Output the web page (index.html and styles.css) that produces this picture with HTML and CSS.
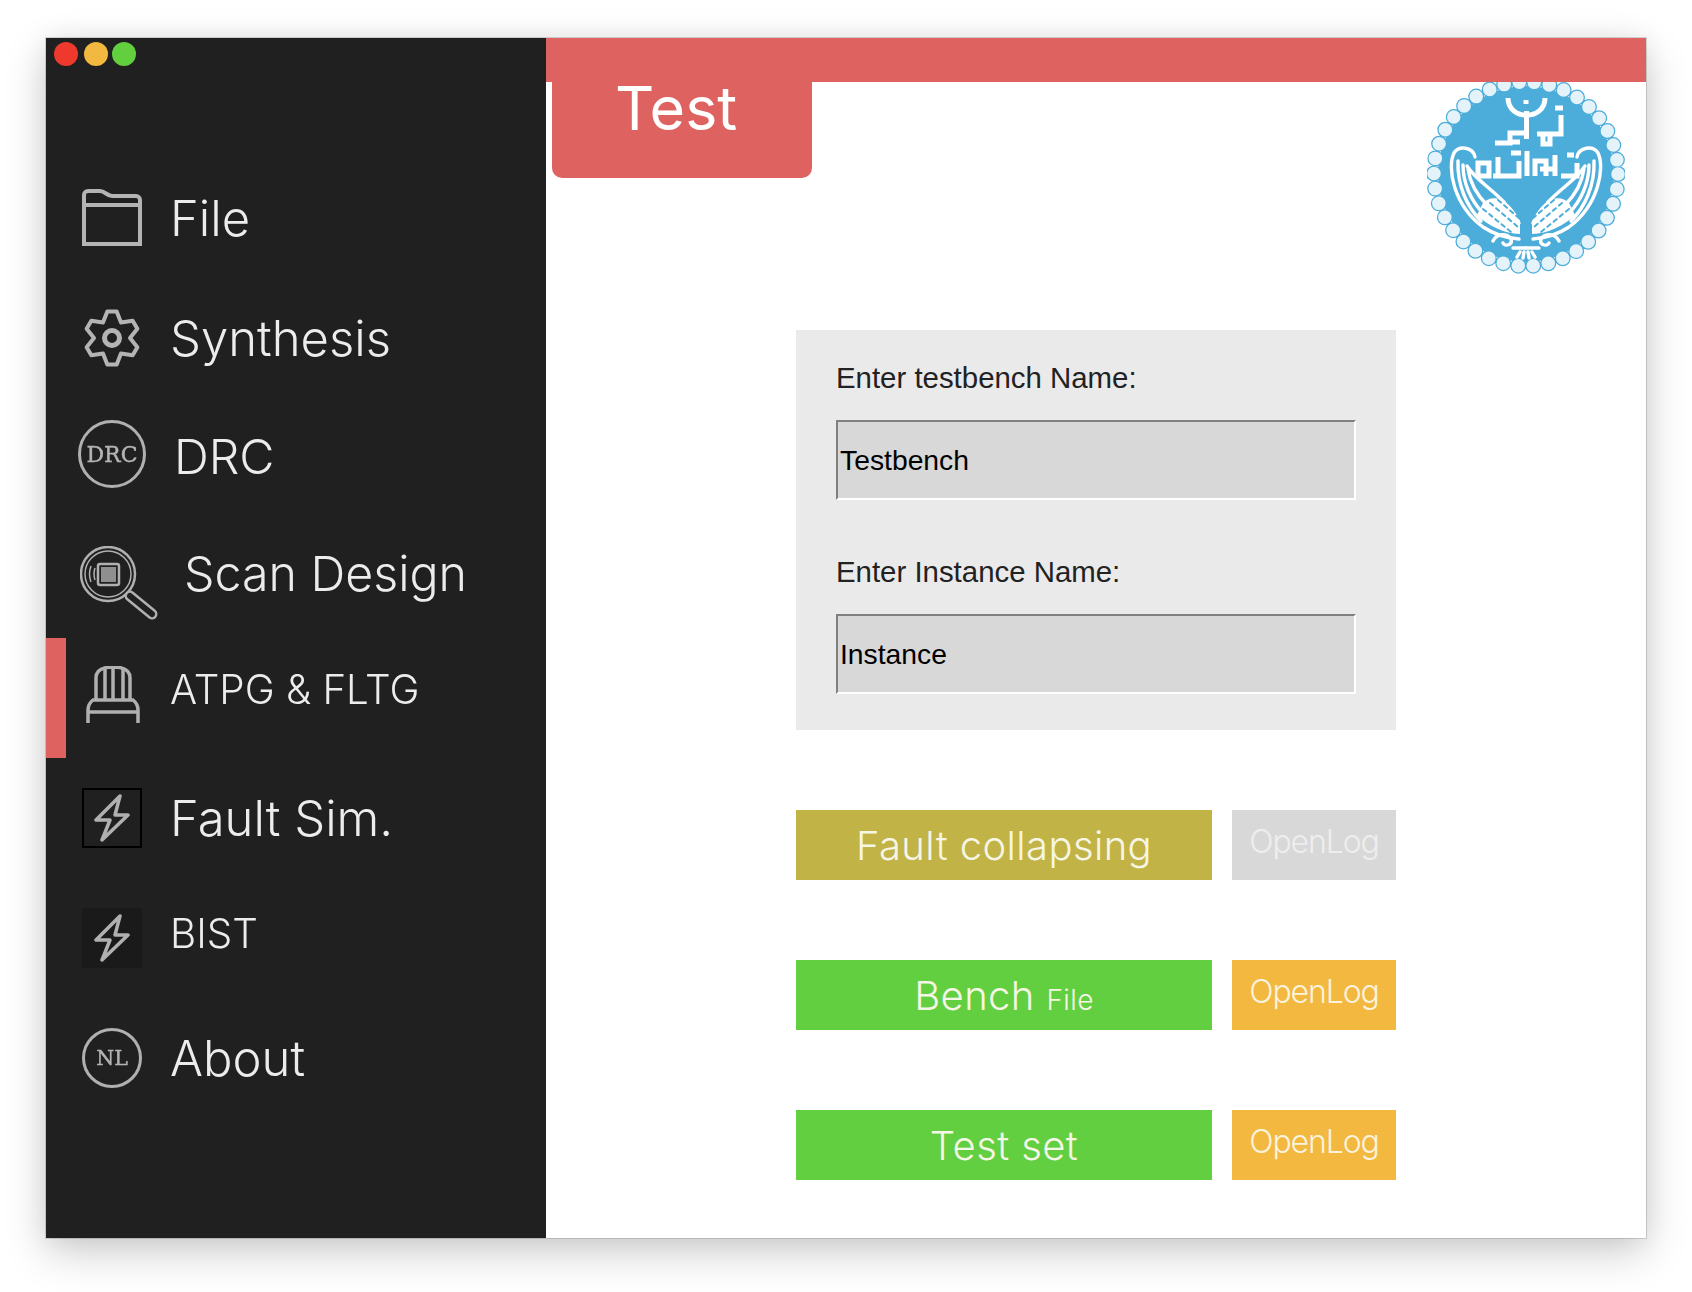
FILE: index.html
```html
<!DOCTYPE html>
<html lang="en">
<head>
<meta charset="utf-8">
<title>Test</title>
<link rel="stylesheet" href="styles.css">
</head>
<body>
<div class="window">
  <aside class="sidebar">
    <div class="lights"><i class="light red"></i><i class="light yellow"></i><i class="light green"></i></div>
    <nav class="nav">
      <a class="row">
        <svg class="icon" viewBox="0 0 60 60"><path d="M2 56V7a4 4 0 0 1 4-4h12c5 0 7 5 12 5h24a4 4 0 0 1 4 4v44zM2 17h56" /></svg>
        <span class="label">File</span>
      </a>
      <a class="row">
        <svg class="icon icon-gear" viewBox="0 0 60 60"><circle cx="30" cy="30" r="7.5"/><path d="M25.31 3.41H34.69L39 14.41 50.68 12.65 55.37 20.77 48 30 55.37 39.23 50.68 47.35 39 45.59 34.69 56.59H25.31L21 45.59 9.32 47.35 4.63 39.23 12 30 4.63 20.77 9.32 12.65 21 14.41Z"/></svg>
        <span class="label">Synthesis</span>
      </a>
      <a class="row row-drc">
        <svg class="icon-drc" viewBox="0 0 68 68"><circle cx="34" cy="34" r="32.5"/><text x="34" y="42" class="seal seal-drc">DRC</text></svg>
        <span class="label label-mid">DRC</span>
      </a>
      <a class="row row-scan">
        <svg class="icon-scan" viewBox="0 0 78 74">
          <circle cx="28" cy="28" r="27"/><circle cx="28" cy="28" r="23" class="thin"/>
          <path class="thin" d="M11 20q-3 8 0 16M15 22q-2 6 0 12"/>
          <rect x="18" y="18" width="21" height="21" rx="2"/>
          <rect x="21" y="21" width="15" height="15" class="chip"/>
          <path class="handle-out" d="M50 50L72 68"/><path class="handle-in" d="M50 50L72 68"/>
        </svg>
        <span class="label label-mid">Scan Design</span>
      </a>
      <a class="row row-active">
        <svg class="icon-chair" viewBox="0 0 60 64"><path d="M14 34V12Q14 1 31 1Q48 1 48 12V34M23 3V34M31 2V34M41 3V34M6 57V44Q6 38 11 34H51Q56 38 56 44V57M6 46H56"/></svg>
        <span class="label label-small">ATPG &amp; FLTG</span>
      </a>
      <a class="row">
        <span class="bolt-box bolt-outlined"><svg class="icon-bolt" viewBox="0 0 60 60"><path d="M38 8 14 32h14l-8 20 26-25H33z"/></svg></span>
        <span class="label">Fault Sim.</span>
      </a>
      <a class="row">
        <span class="bolt-box bolt-filled"><svg class="icon-bolt" viewBox="0 0 60 60"><path d="M38 8 14 32h14l-8 20 26-25H33z"/></svg></span>
        <span class="label label-bist">BIST</span>
      </a>
      <a class="row">
        <svg class="icon-nl" viewBox="0 0 60 60"><circle cx="30" cy="30" r="28.5"/><text x="30" y="37" class="seal seal-nl">NL</text></svg>
        <span class="label">About</span>
      </a>
    </nav>
  </aside>
  <main class="main">
    <div class="topbar"></div>
    <header class="header">
      <div class="tab">Test</div>
      <svg class="logo" viewBox="0 7 198 193">
        <circle cx="99" cy="99" r="88" class="logo-disc"/>
        <circle cx="99" cy="99" r="92" class="pearl-edge"/>
        <circle cx="99" cy="99" r="92" class="pearl"/>
        <g class="logo-line">
          <path d="M81 23C81 46 118 46 118 23M99 25v4M99.500 36V64M68 68H83V58H98M85 67H93"/>
          <path d="M110 59H134V40M128 33h8M116 60V69H123V60"/>
          <path d="M51 101V88H62V101ZM71 101V82M66 101H92V86M84 78h10M100 101V76M108 101V86H119V101M113 94H129M128 101V80M134 101H150V88M140 80h7"/>
        </g>
        <g class="logo-wing">
          <path d="M48 82C46 72 32 70 27 78C20 92 26 130 56 152C68 160 80 163 92 164"/>
          <path d="M31 86C30 110 40 132 54 146M36 90C36 108 44 126 56 138M41 94C43 108 50 120 60 130M40 91C52 110 76 118 92 148"/>
          <path class="wing-mass" d="M56 128C66 118 82 124 93 146V159C78 159 60 150 50 140Z"/>
          <path class="wing-scales" d="M56 134 84 157M63 128 91 152M71 125 93 144M80 127 93 137"/>
          <path d="M66 166C70 158 80 158 84 164C86 170 78 172 76 168M86 173H99M93 177l-3 5M97 177l-1 6"/>
        </g>
        <g class="logo-wing" transform="matrix(-1 0 0 1 198 0)">
          <path d="M48 82C46 72 32 70 27 78C20 92 26 130 56 152C68 160 80 163 92 164"/>
          <path d="M31 86C30 110 40 132 54 146M36 90C36 108 44 126 56 138M41 94C43 108 50 120 60 130M40 91C52 110 76 118 92 148"/>
          <path class="wing-mass" d="M56 128C66 118 82 124 93 146V159C78 159 60 150 50 140Z"/>
          <path class="wing-scales" d="M56 134 84 157M63 128 91 152M71 125 93 144M80 127 93 137"/>
          <path d="M66 166C70 158 80 158 84 164C86 170 78 172 76 168M86 173H99M93 177l-3 5M97 177l-1 6"/>
        </g>
      </svg>
    </header>
    <section class="panel">
      <label class="field-label" for="tb">Enter testbench Name:</label>
      <input class="field" id="tb" type="text" value="Testbench">
      <label class="field-label field-label-next" for="inst">Enter Instance Name:</label>
      <input class="field" id="inst" type="text" value="Instance">
    </section>
    <section class="actions">
      <div class="action">
        <button class="btn btn-main btn-olive">Fault collapsing</button>
        <button class="btn btn-log btn-grey">OpenLog</button>
      </div>
      <div class="action">
        <button class="btn btn-main btn-green">Bench <small class="btn-small">File</small></button>
        <button class="btn btn-log btn-amber">OpenLog</button>
      </div>
      <div class="action">
        <button class="btn btn-main btn-green">Test set</button>
        <button class="btn btn-log btn-amber">OpenLog</button>
      </div>
    </section>
  </main>
</div>
</body>
</html>
```
FILE: styles.css
```css
* { box-sizing: border-box; }
html, body { margin: 0; height: 100%; background: #fff; overflow: hidden; }
body { padding: 38px 46px; font-family: Inter, "Liberation Sans", sans-serif; }

.window {
  width: 1600px; height: 1200px; display: flex;
  box-shadow: 0 0 0 1px rgba(0,0,0,.14), 0 14px 40px rgba(0,0,0,.2), 0 0 24px rgba(0,0,0,.06);
}

.sidebar { width: 500px; flex: none; background: #212021; display: flex; flex-direction: column; }
.lights { height: 120px; display: flex; align-items: flex-start; padding: 4px 0 0 8px; }
.light { width: 24px; height: 24px; border-radius: 50%; }
.red { background: #ee392c; }
.yellow { background: #f2b840; margin-left: 6px; }
.green { background: #61cf3e; margin-left: 4px; }

.nav { display: flex; flex-direction: column; }
.row { height: 120px; display: flex; align-items: center; padding-left: 36px; gap: 28px; color: #ececec; }
.label { font-size: 49px; font-weight: 300; white-space: nowrap; margin-top: 1px; filter: blur(.3px); }
.label-mid { font-size: 48.300px; }
.label-small { font-size: 40.300px; margin-top: 0; margin-bottom: 18px; }
.label-bist { font-size: 40.300px; margin-top: 0; margin-bottom: 10px; }

.icon, .icon-drc, .icon-scan, .icon-chair, .icon-bolt, .icon-nl { filter: blur(.4px); }
.icon { width: 60px; height: 60px; fill: none; stroke: #b4b4b4; stroke-width: 4; }
.icon-gear { stroke-linejoin: round; }
.icon-gear circle { stroke-width: 5; }

.row-drc { padding-left: 32px; gap: 28px; padding-bottom: 8px; }
.row-drc .label { margin-top: 4px; }
.icon-drc { width: 68px; height: 68px; fill: none; stroke: #b0b0b0; stroke-width: 3; }
.seal { font-family: "DejaVu Serif", serif; text-anchor: middle; fill: #b4b4b4; stroke: #b4b4b4; stroke-width: .4; }
.seal-drc { font-size: 22px; }
.seal-nl { font-size: 20.500px; }

.row-scan { padding-left: 34px; gap: 26px; align-items: flex-start; padding-top: 28px; }
.icon-scan { width: 78px; height: 74px; fill: none; stroke: #b0b0b0; stroke-width: 2.500; }
.icon-scan .thin { stroke-width: 1.500; }
.icon-scan .chip { fill: #8f8f8f; stroke: none; }
.icon-scan .handle-out { stroke: #b0b0b0; stroke-width: 11; stroke-linecap: round; }
.icon-scan .handle-in { stroke: #212021; stroke-width: 6; stroke-linecap: round; }
.row-scan .label { margin-top: -2px; }

.row-active { position: relative; }
.row-active::before { content: ""; position: absolute; left: 0; top: 0; width: 20px; height: 120px; background: #de6360; }
.icon-chair { width: 60px; height: 64px; fill: none; stroke: #b0b0b0; stroke-width: 3.500; }

.bolt-box { width: 60px; height: 60px; flex: none; display: block; }
.bolt-outlined { border: 2px solid #000; }
.bolt-filled { background: #1a1a1a; }
.bolt-outlined .icon-bolt { margin: -2px; }
.icon-bolt { width: 60px; height: 60px; display: block; fill: none; stroke: #b0b0b0; stroke-width: 3.500; stroke-linejoin: round; }
.icon-nl { width: 60px; height: 60px; fill: none; stroke: #b0b0b0; stroke-width: 3; }

.main { flex: 1; background: #fff; display: flex; flex-direction: column; min-width: 0; }
.topbar { height: 44px; flex: none; background: #de6360; }
.header { height: 248px; flex: none; display: flex; justify-content: space-between; align-items: flex-start; padding: 0 21px 0 6px; }
.tab {
  width: 260px; height: 96px; background: #de6360; border-radius: 0 0 10px 10px;
  color: #fff; font-size: 61px; font-weight: 400; line-height: 52px; padding-left: 63px;
}
.logo { width: 198px; height: 193px; display: block; filter: blur(.5px); }
.logo-disc { fill: #4cadda; }
.pearl-edge { fill: none; stroke: #4cadda; stroke-width: 16; stroke-linecap: round; stroke-dasharray: 0 15.213; }
.pearl { fill: none; stroke: #e4f2f9; stroke-width: 13.500; stroke-linecap: round; stroke-dasharray: 0 15.213; }
.logo-line { fill: none; stroke: #fff; stroke-width: 5; }
.logo-wing { fill: none; stroke: #fff; stroke-width: 3.400; stroke-linecap: round; }
.wing-mass { fill: #fff; stroke: none; }
.wing-scales { stroke: #4cadda; stroke-width: 2; stroke-dasharray: 4 4; }

.panel { width: 600px; height: 400px; margin-left: 250px; background: #eaeaea; padding: 30px 40px 0; flex: none; }
.field-label { display: block; font-family: "Liberation Sans", Arial, sans-serif; font-size: 29.400px; line-height: 36px; color: #222; height: 60px; }
.field-label-next { margin-top: 54px; }
.field {
  display: block; width: 520px; height: 80px; padding: 0 2px; margin: 0;
  background: #d8d8d8; color: #000; outline: none; border-radius: 0;
  border-style: solid; border-width: 2px; border-color: #808080 #fff #fff #808080;
  font-family: "Liberation Sans", Arial, sans-serif; font-size: 28.300px;
}

.actions { margin: 80px 0 0 250px; display: flex; flex-direction: column; gap: 80px; }
.action { display: flex; gap: 20px; }
.btn { height: 70px; border: 0; padding: 0; margin: 0; color: #fff; font-family: Inter, sans-serif; font-weight: 300; cursor: pointer; }
.btn-main { width: 416px; font-size: 40px; letter-spacing: .4px; color: #f6f6e6; }
.btn-log { width: 164px; font-size: 32px; letter-spacing: -1.100px; padding-bottom: 8px; color: #fbf3dd; }
.btn-small { font-size: 28px; }
.btn-olive { background: #c2b346; }
.btn-green { background: #62cf40; }
.btn-amber { background: #f2b840; }
.btn-grey { background: #d8d8d8; color: #eeeeee; }
```
